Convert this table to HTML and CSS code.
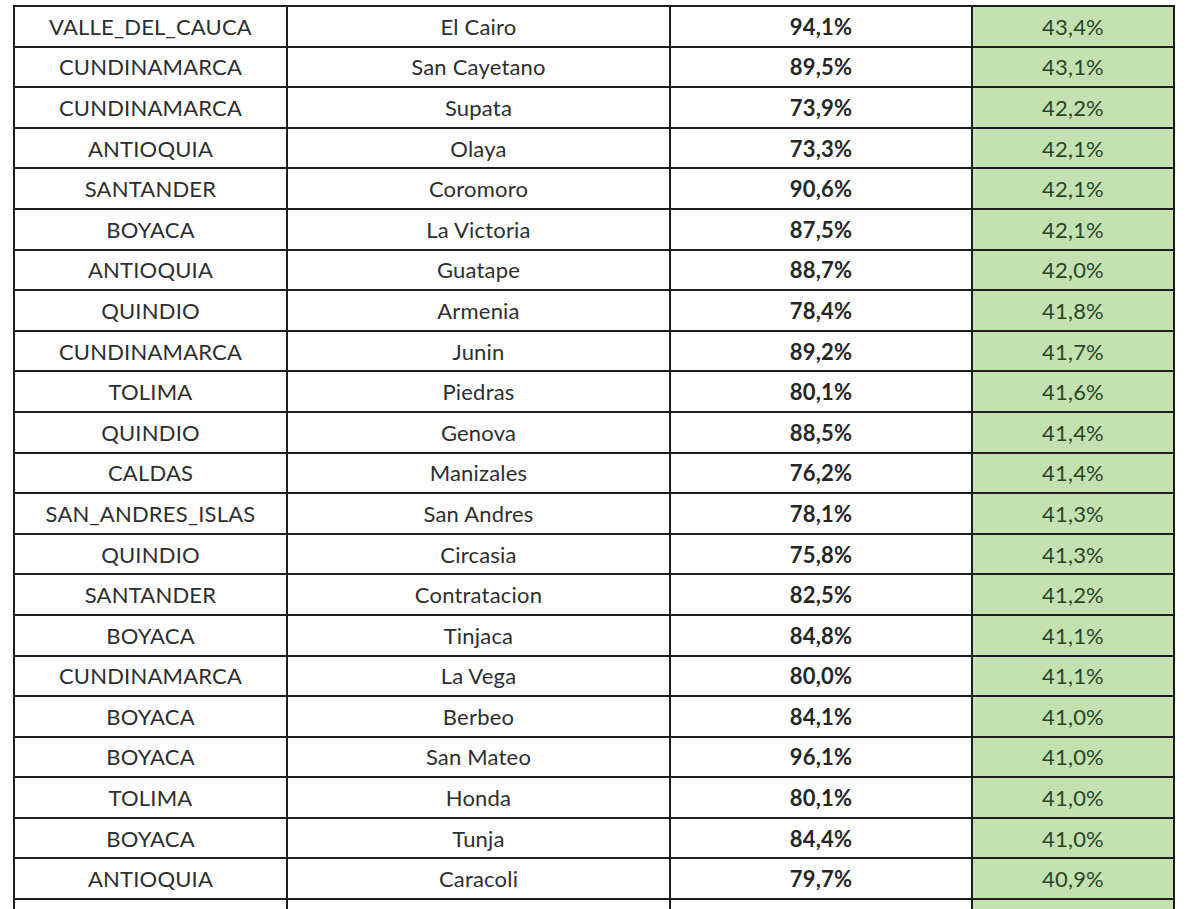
FILE: index.html
```html
<!DOCTYPE html>
<html>
<head>
<meta charset="utf-8">
<link rel="stylesheet" href="styles.css">
</head>
<body>
<table class="grid">
<colgroup><col class="c1"><col class="c2"><col class="c3"><col class="c4"></colgroup>
<tbody>
<tr><td>VALLE_DEL_CAUCA</td><td>El Cairo</td><td class="b">94,1%</td><td class="g">43,4%</td></tr>
<tr><td>CUNDINAMARCA</td><td>San Cayetano</td><td class="b">89,5%</td><td class="g">43,1%</td></tr>
<tr><td>CUNDINAMARCA</td><td>Supata</td><td class="b">73,9%</td><td class="g">42,2%</td></tr>
<tr><td>ANTIOQUIA</td><td>Olaya</td><td class="b">73,3%</td><td class="g">42,1%</td></tr>
<tr><td>SANTANDER</td><td>Coromoro</td><td class="b">90,6%</td><td class="g">42,1%</td></tr>
<tr><td>BOYACA</td><td>La Victoria</td><td class="b">87,5%</td><td class="g">42,1%</td></tr>
<tr><td>ANTIOQUIA</td><td>Guatape</td><td class="b">88,7%</td><td class="g">42,0%</td></tr>
<tr><td>QUINDIO</td><td>Armenia</td><td class="b">78,4%</td><td class="g">41,8%</td></tr>
<tr><td>CUNDINAMARCA</td><td>Junin</td><td class="b">89,2%</td><td class="g">41,7%</td></tr>
<tr><td>TOLIMA</td><td>Piedras</td><td class="b">80,1%</td><td class="g">41,6%</td></tr>
<tr><td>QUINDIO</td><td>Genova</td><td class="b">88,5%</td><td class="g">41,4%</td></tr>
<tr><td>CALDAS</td><td>Manizales</td><td class="b">76,2%</td><td class="g">41,4%</td></tr>
<tr><td>SAN_ANDRES_ISLAS</td><td>San Andres</td><td class="b">78,1%</td><td class="g">41,3%</td></tr>
<tr><td>QUINDIO</td><td>Circasia</td><td class="b">75,8%</td><td class="g">41,3%</td></tr>
<tr><td>SANTANDER</td><td>Contratacion</td><td class="b">82,5%</td><td class="g">41,2%</td></tr>
<tr><td>BOYACA</td><td>Tinjaca</td><td class="b">84,8%</td><td class="g">41,1%</td></tr>
<tr><td>CUNDINAMARCA</td><td>La Vega</td><td class="b">80,0%</td><td class="g">41,1%</td></tr>
<tr><td>BOYACA</td><td>Berbeo</td><td class="b">84,1%</td><td class="g">41,0%</td></tr>
<tr><td>BOYACA</td><td>San Mateo</td><td class="b">96,1%</td><td class="g">41,0%</td></tr>
<tr><td>TOLIMA</td><td>Honda</td><td class="b">80,1%</td><td class="g">41,0%</td></tr>
<tr><td>BOYACA</td><td>Tunja</td><td class="b">84,4%</td><td class="g">41,0%</td></tr>
<tr><td>ANTIOQUIA</td><td>Caracoli</td><td class="b">79,7%</td><td class="g">40,9%</td></tr>
<tr><td></td><td></td><td class="b"></td><td class="g"></td></tr>
</tbody>
</table>
</body>
</html>
```
FILE: styles.css
```css
html, body {
  margin: 0;
  background: #ffffff;
  overflow: hidden;
  height: 909px;
}
body {
  padding: 5px 0 0 13px;
  font-family: "Lato", "Liberation Sans", sans-serif;
}
.grid {
  border-collapse: collapse;
  table-layout: fixed;
  width: 1160px;
}
.c1 { width: 273px; }
.c2 { width: 383px; }
.c3 { width: 302px; }
.c4 { width: 202px; }
.grid td {
  border: 2px solid #1e1e1e;
  height: 40.6px;
  box-sizing: border-box;
  padding: 1px 0 0 0;
  text-align: center;
  vertical-align: middle;
  font-size: 22px;
  letter-spacing: 0.2px;
  color: #2e2e2e;
  line-height: 1;
}
.grid td.b {
  font-weight: 700;
  color: #262626;
}
.grid td.g {
  background: #c4e2b1;
  color: #2a4526;
}
```
